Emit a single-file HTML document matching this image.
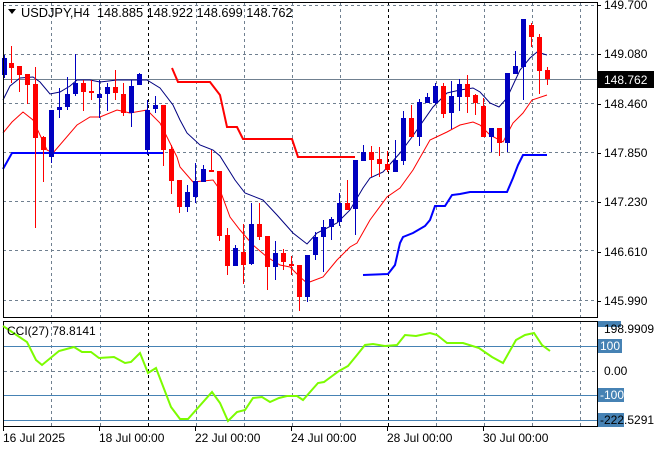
<!DOCTYPE html>
<html><head><meta charset="utf-8"><style>
body{margin:0;background:#fff;width:660px;height:450px;overflow:hidden;font-family:"Liberation Sans",sans-serif}
svg{display:block}
text{font-family:"Liberation Sans",sans-serif;font-size:12px;fill:#000}
</style></head><body>
<svg id="s" width="660" height="450" viewBox="0 0 660 450"></svg>
<script>
var s=document.getElementById('s'),h='';
function L(x1,y1,x2,y2,c,w,d){h+='<line x1="'+x1+'" y1="'+y1+'" x2="'+x2+'" y2="'+y2+'" stroke="'+c+'" stroke-width="'+(w||1)+'"'+(d?' stroke-dasharray="'+d+'"':'')+'/>';}
function P(pts,c,w){h+='<polyline fill="none" stroke="'+c+'" stroke-width="'+w+'" points="'+pts.map(function(p){return p.join(',')}).join(' ')+'"/>';}
function T(x,y,t,c,a,fs){h+='<text x="'+x+'" y="'+y+'"'+(c||fs?' style="'+(c?'fill:'+c+';':'')+(fs?'font-size:'+fs+'px':'')+'"':'')+(a?' text-anchor="'+a+'"':'')+'>'+t+'</text>';}
var vx=[51,100,196,244,292,340,436,484,532,580];
vx.forEach(function(x){L(x+.5,3,x+.5,317,'#708090',1,'3,3');L(x+.5,321,x+.5,426,'#708090',1,'3,3');});
[148,388].forEach(function(x){L(x+.5,3,x+.5,317,'#000',1,'3,3');L(x+.5,321,x+.5,426,'#000',1,'3,3');});
[5,54,103,152,201,250,300].forEach(function(y){L(3,y+.5,597,y+.5,'#708090',1,'3,3');});
L(3,79.5,597,79.5,'#708090',1);
P([[172,68],[178,82],[210,82],[220,95],[227,127],[237,127],[243,139],[292,139],[298,157],[355,157]],'#f00',2);
P([[3,169],[12,153],[163,153]],'#00f',2);
P([[363,275],[388,274],[395,265],[400,243],[403,237],[413,233],[425,226],[430,220],[435,206],[445,206],[452,195],[460,194],[470,192],[507,192],[513,178],[518,165],[523,155],[547,155]],'#00f',2);
P([[3,100],[10,86],[20,78],[33,77],[40,82],[50,94],[60,92],[70,86],[77,80],[90,80],[100,82],[117,80],[133,80],[147,80],[160,88],[173,105],[180,120],[187,133],[200,145],[213,150],[220,156],[235,180],[245,193],[263,200],[277,215],[293,233],[307,244],[317,233],[337,223],[350,210],[363,188],[370,178],[383,172],[400,153],[412,137],[433,107],[447,93],[460,90],[473,88],[480,92],[490,103],[499,107],[507,98],[520,70],[530,58],[537,52],[547,55]],'#000080',1);
P([[3,133],[12,122],[23,112],[33,120],[47,150],[53,153],[77,125],[90,117],[100,117],[117,110],[130,113],[147,110],[160,123],[167,137],[177,157],[180,167],[193,182],[213,180],[220,190],[230,217],[240,230],[253,245],[267,257],[280,265],[290,267],[300,277],[307,283],[323,277],[337,260],[350,247],[357,243],[370,220],[387,197],[400,188],[413,170],[430,140],[447,132],[460,125],[473,122],[480,125],[490,135],[503,142],[513,123],[523,113],[532,100],[547,95]],'#f00',1);
var C=[[4,58,75,55,78,'b'],[11,63,68,46,83,'r'],[19,66,75,66,92,'r'],[27,74,85,74,104,'r'],[35,84,138,67,228,'r'],[43,137,150,136,182,'r'],[51,110,157,110,163,'b'],[59,107,110,88,118,'b'],[67,94,107,77,110,'b'],[75,83,94,54,96,'b'],[83,83,92,80,111,'r'],[91,91,92,80,100,'r'],[99,94,98,80,118,'b'],[107,87,94,83,111,'b'],[115,87,93,70,100,'r'],[123,94,113,83,116,'r'],[131,86,113,80,127,'b'],[139,74,85,73,85,'b'],[147,110,150,100,155,'b'],[155,105,109,96,113,'b'],[163,105,150,105,166,'r'],[171,149,181,145,194,'r'],[179,180,207,180,213,'r'],[187,192,207,185,212,'b'],[195,181,197,163,203,'b'],[203,169,182,165,182,'b'],[211,170,172,150,172,'r'],[219,171,236,171,241,'r'],[227,235,266,228,275,'r'],[235,248,266,245,266,'b'],[243,252,265,224,284,'r'],[251,224,264,203,265,'b'],[259,224,237,203,240,'r'],[267,236,267,236,290,'r'],[275,253,267,241,280,'b'],[283,253,262,249,270,'r'],[291,264,266,256,275,'r'],[299,265,297,265,311,'r'],[307,255,297,255,302,'b'],[315,237,255,232,260,'b'],[323,227,237,220,272,'b'],[331,219,227,217,240,'b'],[339,203,222,193,226,'b'],[347,203,210,180,210,'r'],[355,160,209,160,235,'b'],[363,152,161,145,161,'b'],[371,152,160,146,177,'r'],[379,159,164,147,177,'r'],[387,164,170,151,172,'r'],[395,160,172,140,172,'b'],[403,118,161,111,165,'b'],[411,118,137,105,137,'r'],[419,102,137,99,146,'b'],[427,97,103,93,103,'b'],[435,86,103,83,104,'b'],[443,86,114,83,118,'r'],[451,96,113,81,129,'b'],[459,84,97,79,111,'b'],[467,84,97,75,113,'r'],[475,95,103,94,115,'r'],[483,106,137,98,137,'r'],[491,128,137,128,152,'b'],[499,128,143,128,156,'r'],[507,73,143,73,152,'b'],[515,66,74,51,74,'b'],[523,19,67,19,100,'b'],[531,25,37,23,47,'r'],[539,37,71,34,94,'r'],[547,70,79,67,85,'r']];
C.forEach(function(c){var col=c[5]=='b'?'#0000c0':'#f00';var x=c[0];
h+='<rect x="'+x+'" y="'+c[3]+'" width="1" height="'+(c[4]-c[3])+'" fill="'+col+'"/>';
var t=Math.min(c[1],c[2]),b=Math.max(c[1],c[2]);h+='<rect x="'+(x-2)+'" y="'+t+'" width="5" height="'+Math.max(2,b-t)+'" fill="'+col+'"/>';});
h+='<rect x="3.5" y="2.5" width="594" height="315" fill="none" stroke="#000"/>';
h+='<rect x="3.5" y="321.5" width="594" height="105" fill="none" stroke="#000"/>';
[346,395,420].forEach(function(y){L(4,y+.5,597,y+.5,'#4682b4',1);});
L(4,371.5,597,371.5,'#708090',1,'3,3');
P([[3,326],[27,342],[36,360],[42,365],[59,351],[74,347],[82,352],[91,352],[99,358],[114,357],[125,363],[131,362],[140,353],[148,373],[156,368],[171,407],[180,419],[188,419],[212,392],[220,403],[228,421],[237,412],[245,410],[253,398],[262,397],[270,402],[279,398],[287,396],[297,396],[303,400],[318,383],[324,382],[339,371],[348,366],[357,355],[365,345],[373,344],[385,346],[397,345],[405,335],[416,336],[430,333],[437,335],[447,343],[463,343],[479,348],[492,357],[503,363],[516,340],[525,335],[534,333],[542,345],[550,351]],'#7cfc00',2);
h+='<polygon points="8,9 16,9 12,14" fill="#000"/>';
T(21,17,'USDJPY,H4&#160;&#160;148.885 148.922 148.699 148.762','#000',null,12.8);
T(7,335,'CCI(27) 78.8141');
[[5,'149.700'],[54,'149.080'],[104,'148.460'],[153,'147.850'],[202,'147.230'],[252,'146.610'],[301,'145.990']].forEach(function(p){L(597,p[0]+.5,601,p[0]+.5,'#000');T(604,p[0]+4,p[1]);});
h+='<rect x="598" y="71" width="56" height="17" fill="#000"/>';T(604,84,'148.762','#fff');
h+='<rect x="598" y="321" width="23" height="6" fill="#4682b4"/>';
T(604,333,'198.9909');
h+='<rect x="598" y="339" width="24" height="14" fill="#4682b4"/>';T(600,350,'100','#fff');
T(604,375,'0.00');
h+='<rect x="598" y="388" width="26" height="14" fill="#4682b4"/>';T(600,399,'-100','#fff');
h+='<rect x="598" y="413" width="26" height="14" fill="#4682b4"/>';T(600,424,'-222.5291');
[[3,'16 Jul 2025'],[99,'18 Jul 00:00'],[195,'22 Jul 00:00'],[291,'24 Jul 00:00'],[387,'28 Jul 00:00'],[483,'30 Jul 00:00']].forEach(function(d){L(d[0]+.5,426,d[0]+.5,431,'#000');T(d[0],442,d[1]);});
s.innerHTML=h;
</script>
</body></html>
